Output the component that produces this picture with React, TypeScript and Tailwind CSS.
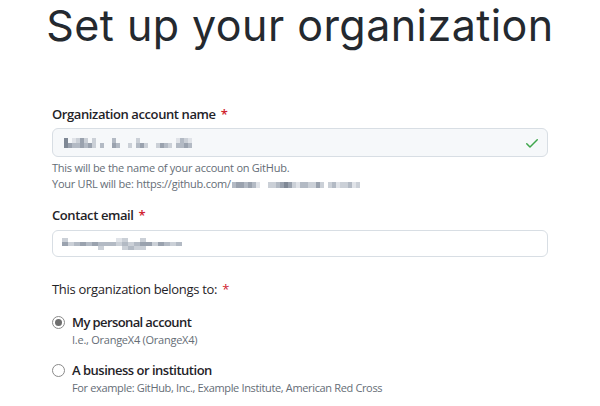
import React from "react";

const body = { fontFamily: '"Open Sans", "Noto Sans", sans-serif' };

const shade: Record<string, string> = {
  a: "#e0e3e8",
  b: "#cbd0d7",
  c: "#b3bac4",
  d: "#9aa2ae",
  e: "#7f8895",
};

function Mosaic({ rows, cw = 4, rh = 5 }: { rows: string[]; cw?: number; rh?: number }) {
  return (
    <span className="flex flex-col shrink-0 blur-[0.5px]">
      {rows.map((r, i) => (
        <span key={i} className="flex">
          {r.split("").map((ch, j) => (
            <span
              key={j}
              className="block"
              style={{ width: cw, height: rh, background: shade[ch] || "transparent" }}
            />
          ))}
        </span>
      ))}
    </span>
  );
}

function Req() {
  return <span className="text-[#cf222e] ml-[5px]">*</span>;
}

export default function App() {
  return (
    <div className="w-[600px] h-[406px] bg-white overflow-hidden text-[#1f2328]" style={body}>
      <h1
        className="text-center text-[43px] leading-[48px] font-normal text-[#24292f] whitespace-nowrap pt-[1px] tracking-[0.45px]"
        style={{ fontFamily: 'Inter, Roboto, "Liberation Sans", sans-serif' }}
      >
        Set up your organization
      </h1>
      <div className="w-[496px] mx-auto mt-[55px]">
        <div className="text-[13px] font-semibold leading-[20px] tracking-[-0.4px]">
          Organization account name
          <Req />
        </div>
        <div className="mt-[4px] h-[29px] rounded-[6px] border border-[#d8dee4] bg-[#f6f8fa] flex items-center justify-between pl-[11px] pr-[7px]">
          <Mosaic
            rows={[
              "e.abdb.b....c.....b.........acba",
              "edccdcdb.c..dc..b.cdb..bdcb.ccdc",
            ]}
          />
          <svg width="16" height="16" viewBox="0 0 16 16" fill="#3fa64c">
            <path d="M13.78 4.22a.75.75 0 0 1 0 1.06l-7.25 7.25a.75.75 0 0 1-1.06 0L2.22 9.28a.751.751 0 0 1 .018-1.042.751.751 0 0 1 1.042-.018L6 10.94l6.72-6.72a.75.75 0 0 1 1.06 0Z" />
          </svg>
        </div>
        <div className="mt-[3px] text-[11px] leading-[16px] text-[#656d76] tracking-[-0.25px]">
          <div>This will be the name of your account on GitHub.</div>
          <div className="flex items-center h-[16px]">
            <span>Your URL will be: https://github.com/</span>
            <span className="flex ml-[1px] mt-[2px]">
              <Mosaic rh={6} cw={4} rows={["cddcdca..bbcdedbaccbbdb.bcabbcab"]} />
            </span>
          </div>
        </div>
        <div className="mt-[13px] text-[13px] font-semibold leading-[20px] tracking-[-0.4px]">
          Contact email
          <Req />
        </div>
        <div className="mt-[5px] h-[27px] rounded-[6px] border border-[#d8dee4] bg-white flex items-center pl-[9px]">
          <Mosaic
            rows={["b........ab..b......", "dbcdcdcccbcbcddbdcbc", "......b...bcbb......"]}
            cw={6}
            rh={4}
          />
        </div>
        <div className="mt-[22px] text-[13px] font-normal leading-[20px] tracking-[-0.3px]">
          This organization belongs to:
          <Req />
        </div>
        <div className="mt-[13px] flex items-start gap-[7px]">
          <div className="mt-[4px] w-[13px] h-[13px] rounded-full border border-[#8a8a8a] flex items-center justify-center">
            <div className="w-[7px] h-[7px] rounded-full bg-[#6e6e6e]" />
          </div>
          <div>
            <div className="text-[13px] font-semibold leading-[20px] tracking-[-0.6px]">My personal account</div>
            <div className="text-[11px] leading-[16px] text-[#656d76] tracking-[-0.25px]">I.e., OrangeX4 (OrangeX4)</div>
          </div>
        </div>
        <div className="mt-[12px] flex items-start gap-[7px]">
          <div className="mt-[4px] w-[13px] h-[13px] rounded-full border border-[#8a8a8a]" />
          <div>
            <div className="text-[13px] font-semibold leading-[20px] tracking-[-0.5px]">A business or institution</div>
            <div className="text-[11px] leading-[16px] text-[#656d76] tracking-[-0.35px]">
              For example: GitHub, Inc., Example Institute, American Red Cross
            </div>
          </div>
        </div>
      </div>
    </div>
  );
}
